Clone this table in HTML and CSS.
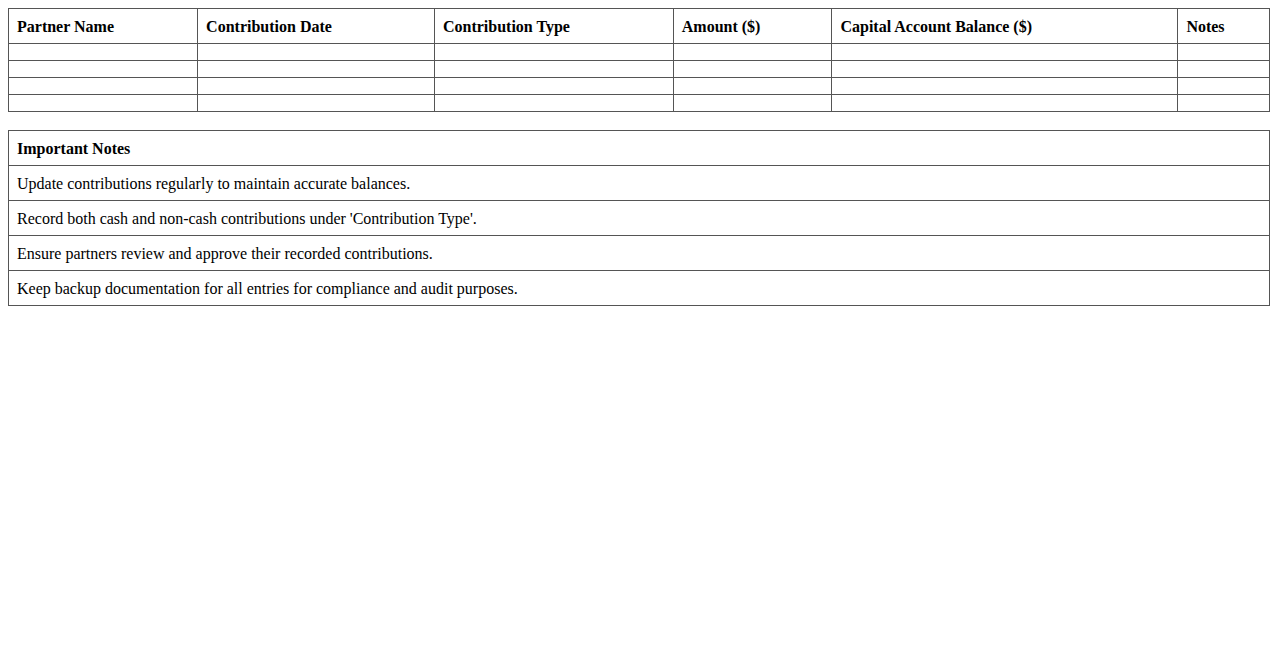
FILE: index.html
```html
<!DOCTYPE html>
<html>
<head>
<meta charset="utf-8">
<link rel="stylesheet" href="styles.css">
</head>
<body>
<table class="grid">
  <thead>
    <tr>
      <th>Partner Name</th>
      <th>Contribution Date</th>
      <th>Contribution Type</th>
      <th>Amount ($)</th>
      <th>Capital Account Balance ($)</th>
      <th>Notes</th>
    </tr>
  </thead>
  <tbody>
    <tr><td></td><td></td><td></td><td></td><td></td><td></td></tr>
    <tr><td></td><td></td><td></td><td></td><td></td><td></td></tr>
    <tr><td></td><td></td><td></td><td></td><td></td><td></td></tr>
    <tr><td></td><td></td><td></td><td></td><td></td><td></td></tr>
  </tbody>
</table>
<table class="grid notes">
  <thead>
    <tr><th>Important Notes</th></tr>
  </thead>
  <tbody>
    <tr><td>Update contributions regularly to maintain accurate balances.</td></tr>
    <tr><td>Record both cash and non-cash contributions under 'Contribution Type'.</td></tr>
    <tr><td>Ensure partners review and approve their recorded contributions.</td></tr>
    <tr><td>Keep backup documentation for all entries for compliance and audit purposes.</td></tr>
  </tbody>
</table>
</body>
</html>
```
FILE: styles.css
```css
body {
  margin: 8px;
  font-family: "Liberation Serif", "Times New Roman", serif;
  font-size: 16px;
  color: #000;
  background: #fff;
}
.grid {
  width: 100%;
  border-collapse: collapse;
  margin-bottom: 18px;
}
.grid th,
.grid td {
  border: 1px solid #555;
  padding: 9px 8px 7px;
  text-align: left;
  line-height: 18px;
}
.grid th {
  font-weight: bold;
}
```
